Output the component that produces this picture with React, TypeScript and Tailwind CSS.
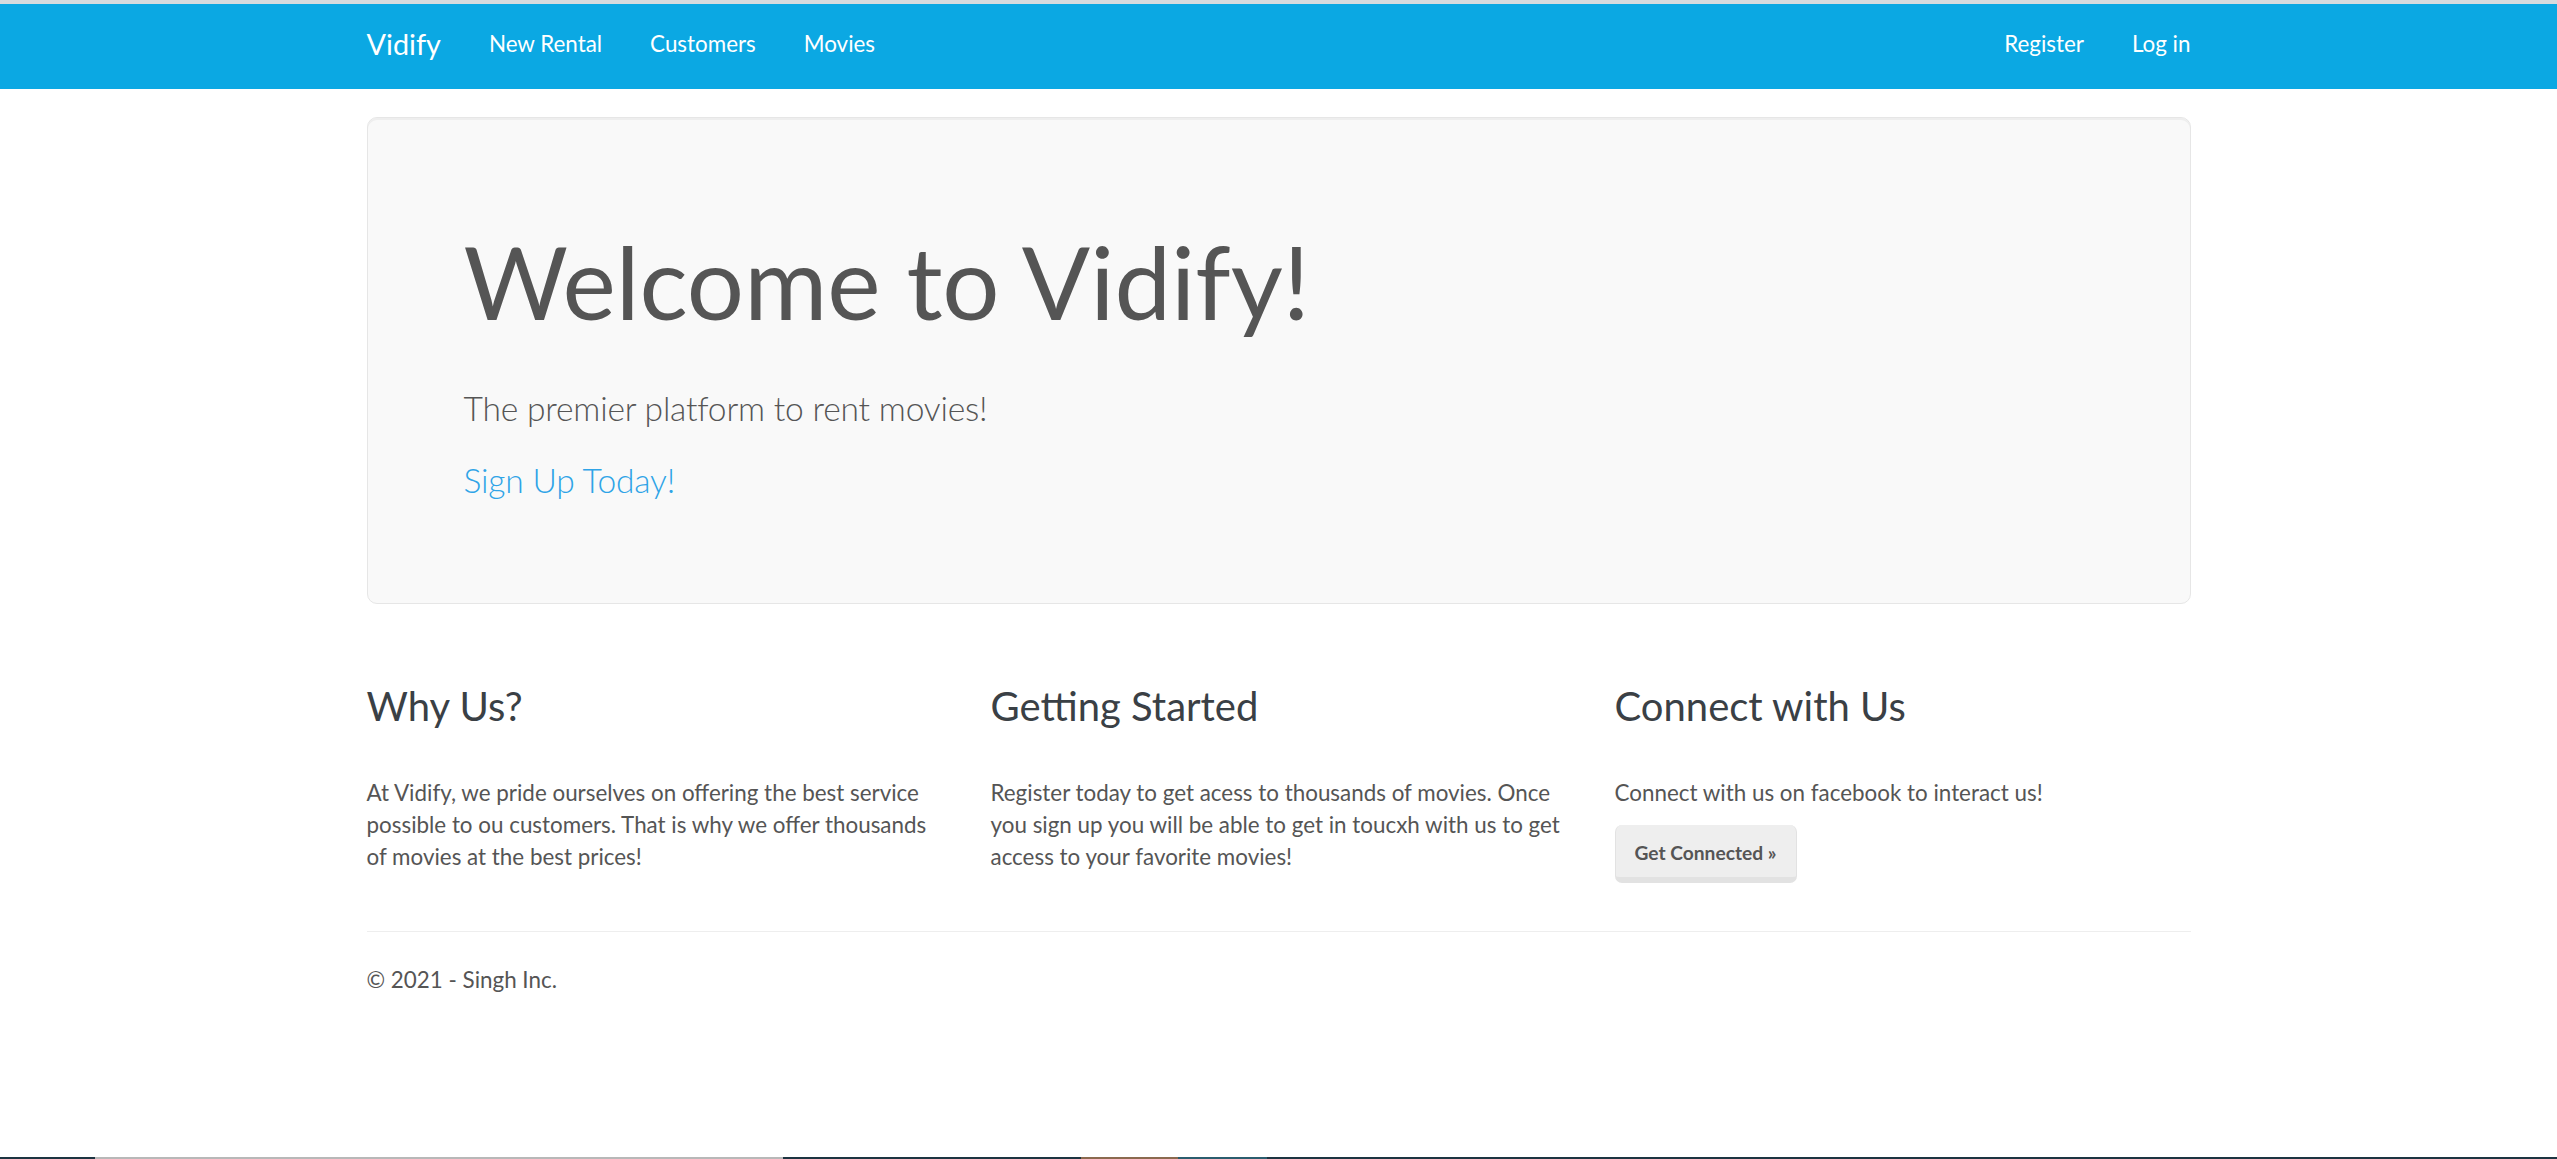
import React from "react";

const navLeft = ["New Rental", "Customers", "Movies"];
const navRight = ["Register", "Log in"];

export default function App() {
  return (
    <div className="min-h-screen flex flex-col bg-white font-['Lato',sans-serif] text-[#555555] text-[22.4px] leading-[32px]">
      <div className="h-[4px] bg-[#d7dbde]" />
      <nav className="h-[85px] bg-[#0ba8e3]">
        <div className="mx-auto w-[1824px] h-[80px] flex items-center justify-between">
          <div className="flex items-center">
            <a className="text-[28.8px] leading-[32px] text-white pr-[24px]">Vidify</a>
            {navLeft.map((n) => (
              <a key={n} className="px-[24px] text-white">
                {n}
              </a>
            ))}
          </div>
          <div className="flex items-center -mr-[24px]">
            {navRight.map((n) => (
              <a key={n} className="px-[24px] text-white">
                {n}
              </a>
            ))}
          </div>
        </div>
      </nav>

      <main className="mx-auto w-[1824px] pt-[28px]">
        <section className="rounded-[10px] border border-[#e6e6e6] bg-[#f9f9f9] shadow-[inset_0_2px_0_#eeeeee] px-[96px] pt-[108px] pb-[99px]">
          <h1 className="text-[101px] leading-[111px] font-normal text-[#555555] mb-[47px]">
            Welcome to Vidify!
          </h1>
          <p className="text-[33.6px] leading-[48px] font-light tracking-[-0.2px] mb-[24px]">
            The premier platform to rent movies!
          </p>
          <p className="text-[33.6px] leading-[48px] font-light tracking-[-0.2px]">
            <a className="text-[#2fa4e7]">Sign Up Today!</a>
          </p>
        </section>

        <div className="grid grid-cols-3 gap-x-[48px] mt-[80px]">
          <div>
            <h2 className="text-[40px] leading-[44px] text-[#3a4045] mb-[49px]">Why Us?</h2>
            <p>
              At Vidify, we pride ourselves on offering the best service possible to ou customers. That is why we
              offer thousands of movies at the best prices!
            </p>
          </div>
          <div>
            <h2 className="text-[40px] leading-[44px] text-[#3a4045] mb-[49px]">Getting Started</h2>
            <p>
              Register today to get acess to thousands of movies. Once you sign up you will be able to get in toucxh
              with us to get access to your favorite movies!
            </p>
          </div>
          <div>
            <h2 className="text-[40px] leading-[44px] text-[#3a4045] mb-[49px]">Connect with Us</h2>
            <p className="mb-[16px]">Connect with us on facebook to interact us!</p>
            <a className="inline-flex items-center h-[58px] pt-[4px] px-[19px] rounded-[7px] bg-[#eeeeee] border-x border-b-[6px] border-[#e2e2e2] text-[19.2px] font-bold text-[#555555]">
              Get Connected »
            </a>
          </div>
        </div>

        <hr className="mt-[48px] border-0 border-t border-[#eeeeee]" />
        <footer className="mt-[32px]">
          <p>© 2021 - Singh Inc.</p>
        </footer>
      </main>

      <div className="mt-auto h-[2px] flex">
        <div className="w-[95px] bg-[#1d3441]" />
        <div className="w-[688px] bg-[#b8b8b8]" />
        <div className="w-[298px] bg-[#1d3441]" />
        <div className="w-[97px] bg-[#8b6a4f]" />
        <div className="w-[89px] bg-[#2b5d6e]" />
        <div className="flex-1 bg-[#1d3441]" />
      </div>
    </div>
  );
}
